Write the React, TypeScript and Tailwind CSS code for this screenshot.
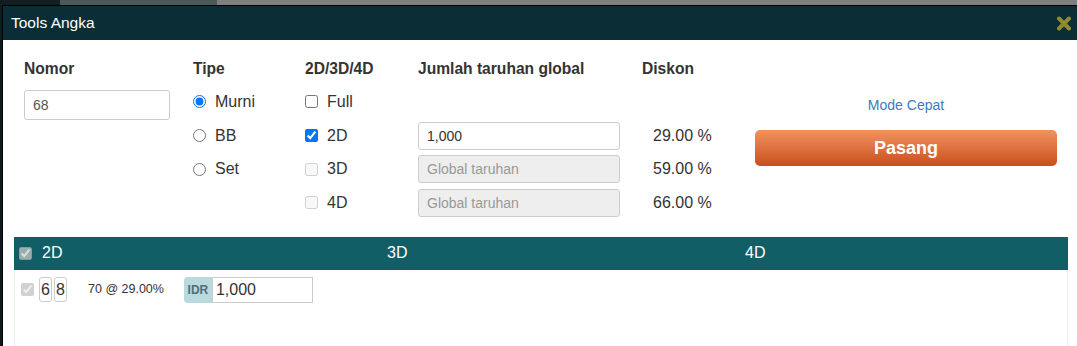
import React from 'react';

const font = { fontFamily: '"Liberation Sans", Arial, sans-serif' };

function CloseIcon() {
  return (
    <svg width="16" height="15" viewBox="0 0 16 15" aria-hidden="true">
      <path d="M3 2.5 L13 12.5 M13 2.5 L3 12.5" stroke="#8f8b30" strokeWidth="4" strokeLinecap="round" />
    </svg>
  );
}

export default function App() {
  return (
    <div className="min-h-[346px] bg-[#0d1b1e] text-[#333]" style={font}>
      <div className="flex h-[5px]">
        <div className="w-[60px] bg-[#0f1f22]" />
        <div className="w-[157px] bg-[#4b5959]" />
        <div className="flex-1 bg-[#808080]" />
      </div>

      <div className="ml-[2px] border-t border-l border-black bg-white">
        <div className="flex h-[34px] items-center justify-between bg-[#0b2e36] pl-[8px] pr-[5px]">
          <span className="text-[15.5px] text-white">Tools Angka</span>
          <CloseIcon />
        </div>

        <div className="flex pl-[21px] pt-[17px]">
          <div className="w-[169px]">
            <div className="mb-[4px] h-[24px] text-[15.6px] font-bold leading-[24px]">Nomor</div>
            <input
              defaultValue="68"
              className="mt-[5px] h-[30px] w-[146px] rounded-[3px] border border-[#ccc] px-[8px] text-[14px] text-[#555] outline-none"
            />
          </div>

          <div className="w-[112px]">
            <div className="mb-[4px] h-[24px] text-[15.6px] font-bold leading-[24px]">Tipe</div>
            {['Murni', 'BB', 'Set'].map((label, i) => (
              <label key={label} className="flex h-[33.7px] items-center gap-[9px] text-[16px]">
                <input type="radio" name="tipe" defaultChecked={i === 0} className="m-0 h-[13px] w-[13px]" />
                {label}
              </label>
            ))}
          </div>

          <div className="w-[113px]">
            <div className="mb-[4px] h-[24px] text-[15.6px] font-bold leading-[24px]">2D/3D/4D</div>
            {[
              { label: 'Full', checked: false, disabled: false },
              { label: '2D', checked: true, disabled: false },
              { label: '3D', checked: false, disabled: true },
              { label: '4D', checked: false, disabled: true },
            ].map(item => (
              <label key={item.label} className="flex h-[33.7px] items-center gap-[9px] text-[16px]">
                <input
                  type="checkbox"
                  defaultChecked={item.checked}
                  disabled={item.disabled}
                  className="m-0 h-[13px] w-[13px]"
                />
                {item.label}
              </label>
            ))}
          </div>

          <div className="w-[224px]">
            <div className="mb-[4px] h-[24px] text-[15.6px] font-bold leading-[24px]">Jumlah taruhan global</div>
            <div className="h-[33.7px]" />
            <div className="flex h-[33.7px] items-center">
              <input
                defaultValue="1,000"
                className="h-[28px] w-[202px] rounded-[3px] border border-[#ccc] px-[8px] text-[14px] text-[#333] outline-none"
              />
            </div>
            {[0, 1].map(i => (
              <div key={i} className="flex h-[33.7px] items-center">
                <input
                  disabled
                  placeholder="Global taruhan"
                  className="h-[28px] w-[202px] rounded-[3px] border border-[#ccc] bg-[#eee] px-[8px] text-[14px] placeholder:text-[#999] outline-none"
                />
              </div>
            ))}
          </div>

          <div className="w-[113px]">
            <div className="mb-[4px] h-[24px] text-[15.6px] font-bold leading-[24px]">Diskon</div>
            <div className="h-[33.7px]" />
            {['29.00 %', '59.00 %', '66.00 %'].map(value => (
              <div key={value} className="flex h-[33.7px] items-center pl-[11px] text-[16px]">
                {value}
              </div>
            ))}
          </div>

          <div className="w-[302px]">
            <div className="mb-[4px] h-[24px]" />
            <div className="mt-[14px] h-[20px] text-center text-[14px] leading-[20px] text-[#3a7bc0]">Mode Cepat</div>
            <button
              type="button"
              className="mt-[15px] h-[36px] w-full rounded-[5px] bg-gradient-to-b from-[#f1925f] to-[#c94f17] text-[18px] font-bold text-white"
            >
              Pasang
            </button>
          </div>
        </div>

        <div className="ml-[11px] mr-[9px] mt-[17px]">
          <div className="grid h-[33px] grid-cols-[367px_358px_1fr] items-center bg-[#115e67] text-[16px] text-white">
            <div className="flex items-center gap-[10px] pl-[5px]">
              <input type="checkbox" defaultChecked disabled className="m-0 h-[13px] w-[13px]" />
              2D
            </div>
            <div className="pl-[6px]">3D</div>
            <div className="pl-[6px]">4D</div>
          </div>

          <div className="h-[76px] border-x border-[#eee] pt-[7px]">
            <div className="flex items-center pl-[6px]">
              <input type="checkbox" defaultChecked disabled className="m-0 h-[13px] w-[13px]" />
              <div className="ml-[5px] flex gap-[2px]">
                {['6', '8'].map(d => (
                  <span
                    key={d}
                    className="flex h-[25px] w-[13px] items-center justify-center rounded-[3px] border border-[#ccc] text-[16px]"
                  >
                    {d}
                  </span>
                ))}
              </div>
              <span className="ml-[21px] text-[12.5px]">70 @ 29.00%</span>
              <div className="ml-[20px] flex h-[26px] w-[129px]">
                <span className="flex w-[28px] items-center justify-center rounded-l-[4px] bg-[#b9d9dd] text-[12px] font-bold text-[#4d6f75]">
                  IDR
                </span>
                <input
                  defaultValue="1,000"
                  className="min-w-0 flex-1 border border-[#ccc] px-[3px] text-[16px] text-[#333] outline-none"
                />
              </div>
            </div>
          </div>
        </div>
      </div>
    </div>
  );
}
